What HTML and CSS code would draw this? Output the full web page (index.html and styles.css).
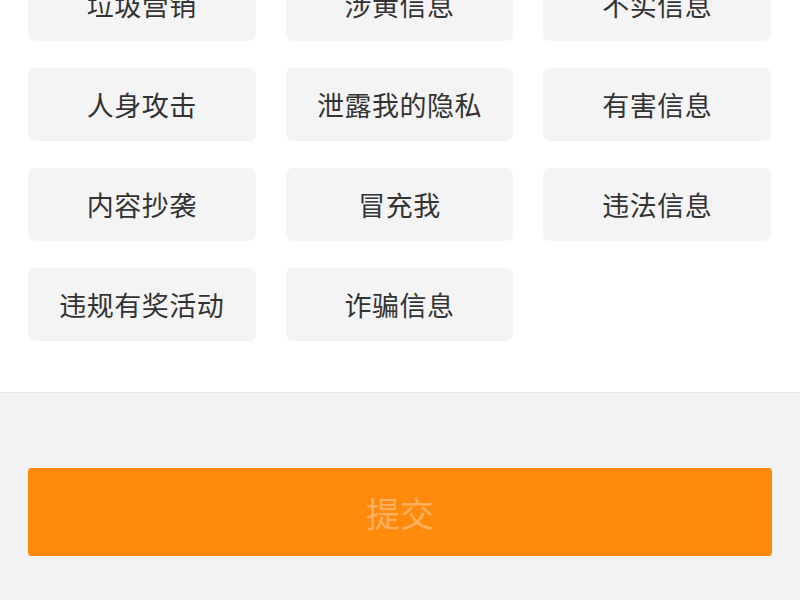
FILE: index.html
```html
<!DOCTYPE html>
<html lang="zh-CN">
<head>
<meta charset="utf-8">
<link rel="stylesheet" href="styles.css">
</head>
<body>
<div class="page">
  <section class="reasons">
    <div class="grid">
      <div class="tile">垃圾营销</div>
      <div class="tile">涉黄信息</div>
      <div class="tile">不实信息</div>
      <div class="tile">人身攻击</div>
      <div class="tile">泄露我的隐私</div>
      <div class="tile">有害信息</div>
      <div class="tile">内容抄袭</div>
      <div class="tile">冒充我</div>
      <div class="tile">违法信息</div>
      <div class="tile">违规有奖活动</div>
      <div class="tile">诈骗信息</div>
    </div>
  </section>
  <section class="footer">
    <button class="submit">提交</button>
  </section>
</div>
</body>
</html>
```

FILE: styles.css
```css
html, body {
  margin: 0;
  padding: 0;
  height: 100%;
  overflow: hidden;
  background: #f2f2f4;
  font-family: "Noto Sans CJK SC", "Noto Sans", sans-serif;
}
.page {
  width: 800px;
  height: 600px;
  display: flex;
  flex-direction: column;
}
.reasons {
  background: #ffffff;
  height: 392px;
  box-sizing: border-box;
  padding: 0 29px 0 28px;
  overflow: hidden;
}
.grid {
  margin-top: -32px;
  display: grid;
  grid-template-columns: repeat(3, 1fr);
  column-gap: 30px;
  row-gap: 27px;
}
.tile {
  height: 73px;
  background: #f4f4f4;
  border-radius: 7px;
  display: flex;
  align-items: center;
  justify-content: center;
  font-size: 27px;
  color: #333333;
  letter-spacing: 0.5px;
}
.footer {
  flex: 1;
  border-top: 1px solid #e6e6e6;
  background: #f2f2f4;
  padding: 75px 28px 0 28px;
}
.submit {
  display: block;
  width: 744px;
  height: 88px;
  border: none;
  border-radius: 3px;
  background: #ff8a0c;
  color: #ffb060;
  font-family: "Noto Sans CJK SC", "Noto Sans", sans-serif;
  font-size: 34px;
  padding: 0;
}
```
